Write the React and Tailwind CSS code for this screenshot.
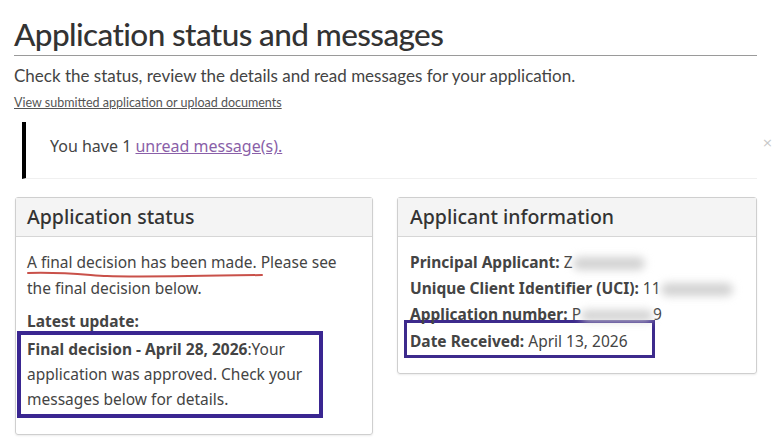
export default function App() {
  return (
    <div className="min-h-screen bg-white text-[#333] pt-[14px] pl-[14px] pr-[25px]">
      {/* Page heading */}
      <h1 className="font-['Lato',sans-serif] text-[31.5px] tracking-[-0.6px] font-medium leading-[40px] text-[#333] border-b border-[#9a9a9a] pb-[1px]">
        Application status and messages
      </h1>
      <p className="font-['Lato',sans-serif] text-[17px] text-[#444] mt-[9px] leading-[22px]">
        Check the status, review the details and read messages for your application.
      </p>
      <a href="#" className="block font-['Lato',sans-serif] text-[12.5px] text-[#555] underline mt-[8px] leading-[16px]">
        View submitted application or upload documents
      </a>

      {/* Alert */}
      <div className="relative ml-[8px] mt-[11px] flex items-center h-[57px] border-l-4 border-black border-b border-b-[#f0f0f0] pl-[24px] pb-[8px]">
        <p className="font-['Noto_Sans',sans-serif] text-[16px] text-[#444]">
          You have 1{' '}
          <a href="#" className="text-[#8a5fa8] underline">unread message(s).</a>
        </p>
        <span className="absolute right-[-16px] top-[11px] text-[#c8c8c8] text-[13px] font-['DejaVu_Sans',sans-serif]">×</span>
      </div>

      {/* Panels */}
      <div className="flex items-start gap-[24px] mt-[18px] ml-[1px] font-['Noto_Sans',sans-serif]">
        {/* Application status */}
        <section className="w-[358px] border border-[#cfcfcf] rounded-[3px] shadow-[0_1px_2px_rgba(0,0,0,0.08)]">
          <div className="h-[39px] bg-[#f4f4f4] border-b border-[#d6d6d6] px-[11px] flex items-center">
            <h2 className="text-[19.5px] font-medium text-[#333]">Application status</h2>
          </div>
          <div className="px-[11px] pt-[12px] pb-[16px] text-[15.5px] leading-[26px] text-[#444]">
            <p className="relative">
              A final decision has been made. Please see the final decision below.
              <svg className="absolute left-0 top-[22px]" width="240" height="8" viewBox="0 0 240 8">
                <path d="M1 2 C 40 1, 60 4, 80 5 S 180 5, 235 4" stroke="#c9514a" strokeWidth="2" fill="none" strokeLinecap="round" />
              </svg>
            </p>
            <p className="mt-[8px] font-bold leading-[24px]">Latest update:</p>
            <div className="-ml-[10px] -mt-[2px] w-[306px] border-4 border-[#3a2691] pl-[6px] py-[2px] leading-[25px]">
              <span className="font-bold">Final decision - April 28, 2026</span>:Your application was approved. Check your messages below for details.
            </div>
          </div>
        </section>

        {/* Applicant information */}
        <section className="w-[360px] border border-[#cfcfcf] rounded-[3px] shadow-[0_1px_2px_rgba(0,0,0,0.08)]">
          <div className="h-[39px] bg-[#f4f4f4] border-b border-[#d6d6d6] px-[12px] flex items-center">
            <h2 className="text-[19.5px] font-medium text-[#333]">Applicant information</h2>
          </div>
          <div className="px-[12px] pt-[12px] pb-[15px] text-[15.5px] leading-[26px] text-[#444]">
            <p className="whitespace-nowrap">
              <span className="font-bold">Principal Applicant:</span> Z
              <span className="inline-block align-middle w-[72px] h-[13px] bg-[#d2d2d2] blur-[4px] rounded-full" />
            </p>
            <p className="whitespace-nowrap">
              <span className="font-bold">Unique Client Identifier (UCI):</span> 11
              <span className="inline-block align-middle w-[72px] h-[13px] bg-[#d2d2d2] blur-[4px] rounded-full" />
            </p>
            <p className="whitespace-nowrap">
              <span className="font-bold">Application number:</span> P
              <span className="inline-block align-middle w-[72px] h-[11px] bg-[#d2d2d2] blur-[4px] rounded-full" />9
            </p>
            <div className="-ml-[6px] -mt-[7px] w-[251px] border-[3px] border-[#3d2a8c] pl-[3px] pt-[4px] leading-[28px]">
              <span className="font-bold">Date Received:</span> April 13, 2026
            </div>
          </div>
        </section>
      </div>
    </div>
  );
}
